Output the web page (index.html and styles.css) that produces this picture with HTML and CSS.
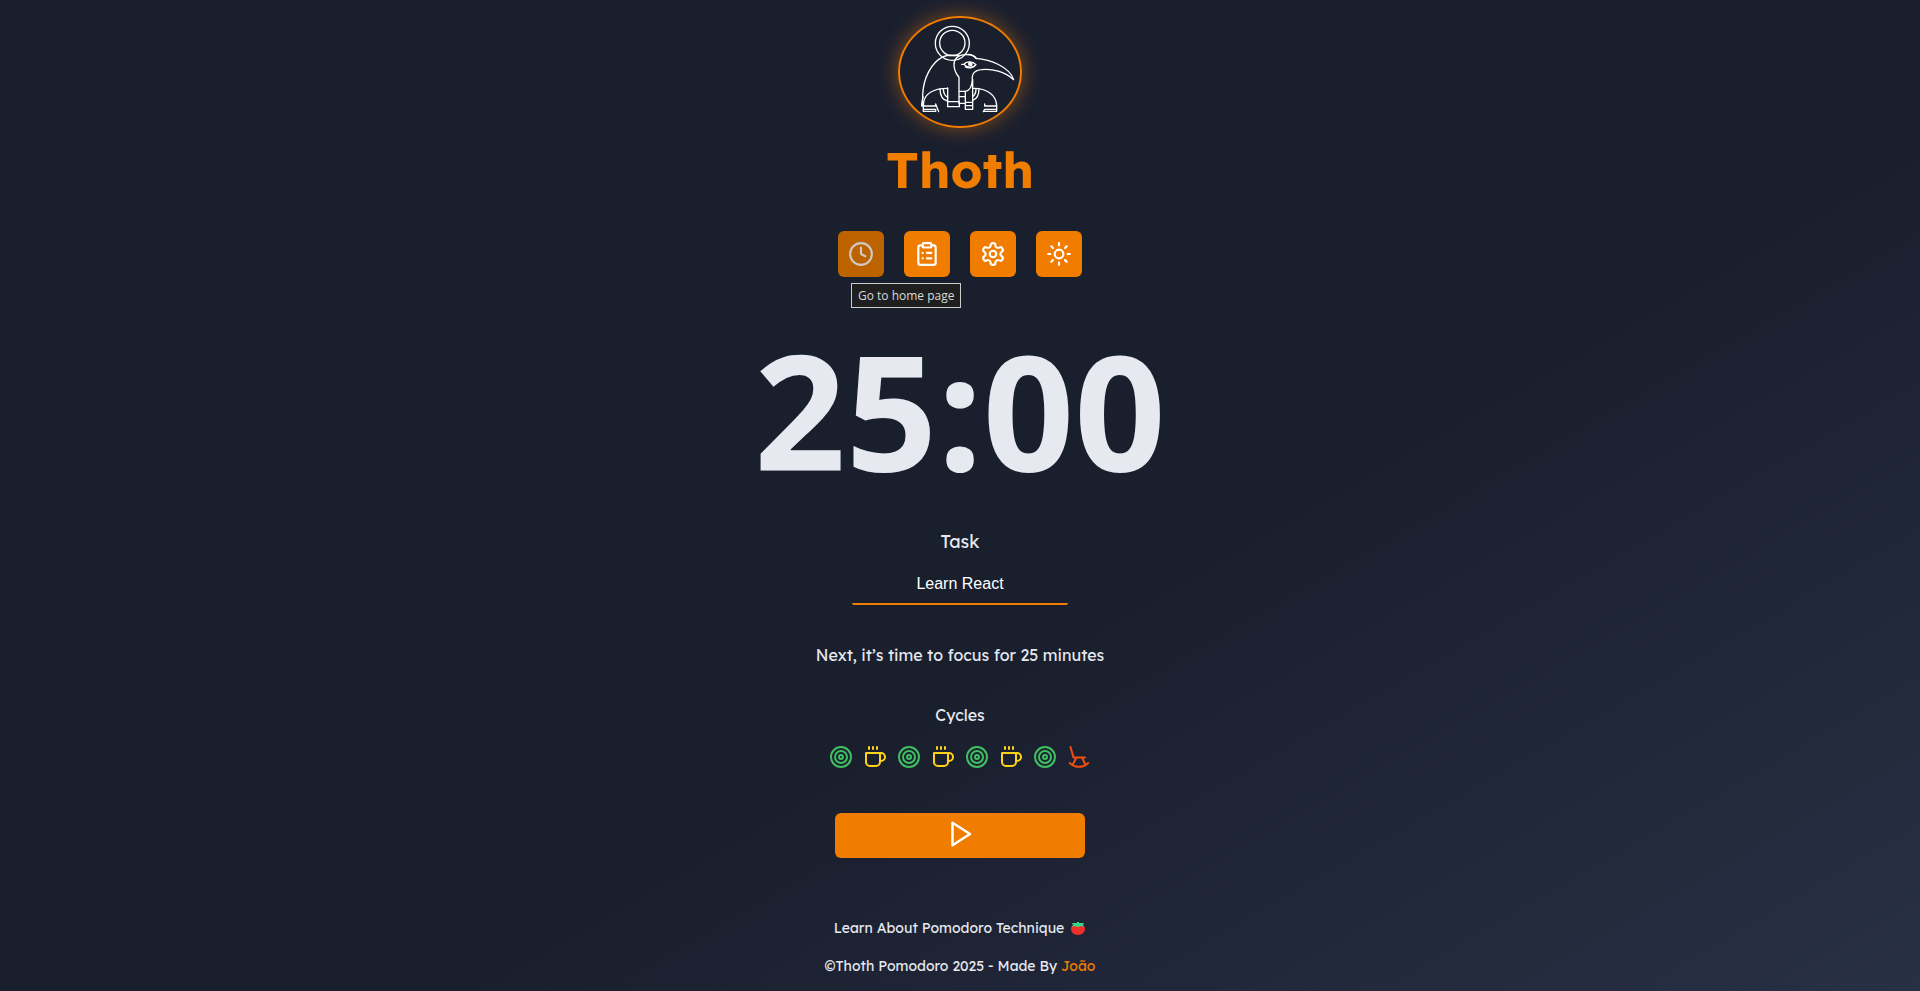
FILE: index.html
```html
<!DOCTYPE html>
<html lang="en">
<head>
<meta charset="utf-8">
<meta name="viewport" content="width=device-width, initial-scale=1">
<title>Thoth</title>
<link rel="stylesheet" href="styles.css">
</head>
<body>
<svg class="sprite" aria-hidden="true">
  <symbol id="target" viewBox="0 0 24 24"><circle cx="12" cy="12" r="10"/><circle cx="12" cy="12" r="6"/><circle cx="12" cy="12" r="2"/></symbol>
  <symbol id="coffee" viewBox="0 0 24 24"><path d="M17 8h1a4 4 0 1 1 0 8h-1M3 8h14v9a4 4 0 0 1-4 4H7a4 4 0 0 1-4-4ZM6 2v2M10 2v2M14 2v2"/></symbol>
  <symbol id="chair" viewBox="0 0 24 24"><path d="M3.500 2 6.500 12.500H18M9.500 12.500 5.500 20M15 12.500 18.500 20M2.750 18a13 13 0 0 0 18.500 0"/></symbol>
</svg>
<header class="header">
  <svg class="logo" viewBox="60 54 360 324" role="img" aria-label="Thoth logo">
    <circle cx="217" cy="130" r="51"/><circle cx="217" cy="129" r="38"/>
    <path d="M128 318V285C130 235 153 188 190 170C205 163 222 166 236 167"/>
    <path d="M125 318C125 305 127 302 129 290"/>
    <path d="M237 310V232C229 221 223 216 222 195C222 175 235 165 256 164C273 163 281 167 288 175C330 178 388 200 401 239C375 215 335 205 305 209C284 211 275 220 277 240C276 260 268 272 256 274H237"/>
    <path d="M265 163C276 163 284 167 290 176"/>
    <path d="M245 193H252C259 183 278 183 288 194C277 205 260 203 252 193M256 201C266 206 279 203 284 199"/>
    <circle class="pupil" cx="271" cy="192" r="5"/>
    <path d="M203 265C160 265 130 281 130 318M278 265C320 264 350 285 350 318"/>
    <path d="M130 318H167V312L176 335M130 318V334H167V328H130M350 318H314V312M314 328L310 335M350 318V334H312M350 328H314"/>
    <path d="M180 266C180 288 190 300 203 303M190 266C190 280 196 288 203 292M297 266C297 284 290 297 278 301M288 266C288 278 284 286 278 290"/>
    <path d="M203 264V320H238V305M203 305H238M238 290H256M238 310H256"/>
    <path d="M256 274V328H278V238M256 307H278M256 317H278"/>
  </svg>
  <h1 class="brand">Thoth</h1>
  <nav class="menu" aria-label="Main">
    <a class="menu-link active" href="#home" aria-label="Go to home page"><svg class="icon" viewBox="0 0 24 24"><circle cx="12" cy="12" r="10"/><path d="M12 6v6l4 2"/></svg></a>
    <a class="menu-link" href="#history" aria-label="History"><svg class="icon" viewBox="0 0 24 24"><rect x="8" y="2" width="8" height="4" rx="1"/><path d="M16 4h2a2 2 0 0 1 2 2v14a2 2 0 0 1-2 2H6a2 2 0 0 1-2-2V6a2 2 0 0 1 2-2h2M12 11h4M12 16h4M8 11h.01M8 16h.01"/></svg></a>
    <a class="menu-link" href="#settings" aria-label="Settings"><svg class="icon" viewBox="0 0 24 24"><path d="M12.220 2h-.44a2 2 0 0 0-2 2v.18a2 2 0 0 1-1 1.730l-.43.25a2 2 0 0 1-2 0l-.15-.08a2 2 0 0 0-2.730.73l-.22.38a2 2 0 0 0 .73 2.730l.15.1a2 2 0 0 1 1 1.720v.51a2 2 0 0 1-1 1.740l-.15.09a2 2 0 0 0-.73 2.730l.22.38a2 2 0 0 0 2.730.73l.15-.08a2 2 0 0 1 2 0l.43.25a2 2 0 0 1 1 1.730V20a2 2 0 0 0 2 2h.44a2 2 0 0 0 2-2v-.18a2 2 0 0 1 1-1.730l.43-.25a2 2 0 0 1 2 0l.15.08a2 2 0 0 0 2.730-.73l.22-.39a2 2 0 0 0-.73-2.730l-.15-.08a2 2 0 0 1-1-1.740v-.5a2 2 0 0 1 1-1.740l.15-.09a2 2 0 0 0 .73-2.730l-.22-.38a2 2 0 0 0-2.730-.73l-.15.08a2 2 0 0 1-2 0l-.43-.25a2 2 0 0 1-1-1.730V4a2 2 0 0 0-2-2z"/><circle cx="12" cy="12" r="3"/></svg></a>
    <button class="menu-link" type="button" aria-label="Change theme"><svg class="icon" viewBox="0 0 24 24"><circle cx="12" cy="12" r="4"/><path d="M12 2v2M12 20v2M4.930 4.930l1.410 1.410M17.660 17.660l1.410 1.410M2 12h2M20 12h2M6.340 17.660l-1.410 1.410M19.070 4.930l-1.410 1.410"/></svg></button>
    <span class="tooltip" role="tooltip">Go to home page</span>
  </nav>
</header>
<main class="main">
  <div class="timer">25:00</div>
  <form class="form">
    <label class="task-label" for="task">Task</label>
    <input class="task-input" id="task" type="text" value="Learn React">
    <p class="tip">Next, it’s time to focus for 25 minutes</p>
    <section class="cycles">
      <h2 class="cycles-title">Cycles</h2>
      <div class="cycle-list">
        <svg class="cycle focus"><use href="#target"/></svg>
        <svg class="cycle short"><use href="#coffee"/></svg>
        <svg class="cycle focus"><use href="#target"/></svg>
        <svg class="cycle short"><use href="#coffee"/></svg>
        <svg class="cycle focus"><use href="#target"/></svg>
        <svg class="cycle short"><use href="#coffee"/></svg>
        <svg class="cycle focus"><use href="#target"/></svg>
        <svg class="cycle long"><use href="#chair"/></svg>
      </div>
    </section>
    <button class="start" type="button" aria-label="Start task"><svg class="play" viewBox="0 0 24 24"><path d="M6 3l14 9-14 9z"/></svg></button>
  </form>
</main>
<footer class="footer">
  <a class="footer-link" href="#about">Learn About Pomodoro Technique <svg class="tomato" viewBox="0 0 16 16"><path class="fruit" d="M8 5c5-1 7 1 7 4s-3 6-7 6-7-3-7-6 2-5 7-4z"/><path class="leaf" d="M2 3h5V2h2v1h5l-1 2 1 2-3-1-3 1-3-1-3 1 1-2z"/></svg></a>
  <p class="credit">©Thoth Pomodoro 2025 - Made By <a class="author" href="#author">João</a></p>
</footer>
</body>
</html>
```
FILE: styles.css
```css
:root {
  --primary: #f07c00;
  --text: #e6e9f0;
}
* { box-sizing: border-box; margin: 0; padding: 0; }
body {
  min-height: 100vh;
  padding-top: 16px;
  background: linear-gradient(150deg, #1a1f2e 60%, #283044);
  color: var(--text);
  font: 400 16px/24px Lexend, Inter, sans-serif;
  display: flex;
  flex-direction: column;
  align-items: center;
}
a { color: inherit; text-decoration: none; }
svg { fill: none; stroke: currentColor; stroke-width: 2; stroke-linecap: round; stroke-linejoin: round; }
.sprite { display: none; }
.header, .main, .form, .footer, .cycles { display: flex; flex-direction: column; align-items: center; }
.logo {
  width: 124px;
  height: 112px;
  border: 2px solid var(--primary);
  border-radius: 50%;
  box-shadow: 0 0 20px rgba(240, 124, 0, 0.5);
  color: #fff;
  stroke-width: 4;
}
.pupil { fill: currentColor; }
.brand { margin-top: 10px; color: var(--primary); font-size: 50px; line-height: 64px; font-weight: 700; }
.menu { position: relative; display: flex; gap: 20px; margin-top: 29px; }
.menu-link {
  display: flex;
  align-items: center;
  justify-content: center;
  width: 46px;
  height: 46px;
  border: 0;
  border-radius: 6px;
  background: var(--primary);
  color: #fff;
  cursor: pointer;
}
.active { background: #bc6300; color: #cfc8c2; }
.icon { width: 26px; height: 26px; }
.tooltip {
  position: absolute;
  top: 52px;
  left: 13px;
  padding: 0 6px;
  border: 1px solid #ccc;
  background: #1f1f1f;
  color: #d8d8d8;
  font: 400 12px/23px "Segoe UI", "Open Sans", sans-serif;
  white-space: nowrap;
}
.timer { margin-top: 52px; font: 700 160px/160px "Segoe UI", "Open Sans", sans-serif; }
.task-label { margin-top: 41px; font-size: 18px; }
.task-input {
  width: 216px;
  height: 42px;
  margin-top: 9px;
  padding-top: 1px;
  border: 0;
  border-bottom: 2px solid var(--primary);
  border-radius: 2px;
  background: transparent;
  color: #fff;
  font: 16px "Liberation Sans", sans-serif;
  text-align: center;
}
.tip { margin-top: 38px; }
.cycles { margin-top: 36px; gap: 18px; }
.cycles-title { font: inherit; }
.cycle-list { display: flex; gap: 10px; }
.cycle { width: 24px; height: 24px; }
.focus { color: #3fc060; }
.short { color: #ffd21a; }
.long { color: #ef4f10; }
.start {
  display: flex;
  align-items: center;
  justify-content: center;
  width: 250px;
  height: 45px;
  margin-top: 44px;
  padding-bottom: 3px;
  border: 0;
  border-radius: 6px;
  background: var(--primary);
  color: #fff;
  cursor: pointer;
}
.play { width: 30px; height: 30px; }
.footer { margin-top: 58px; gap: 14px; font-size: 14px; }
.footer-link { display: flex; align-items: center; gap: 6px; }
.tomato { width: 16px; height: 16px; stroke: none; }
.fruit { fill: #f03028; }
.leaf { fill: #35d68a; }
.author { color: var(--primary); }
```
